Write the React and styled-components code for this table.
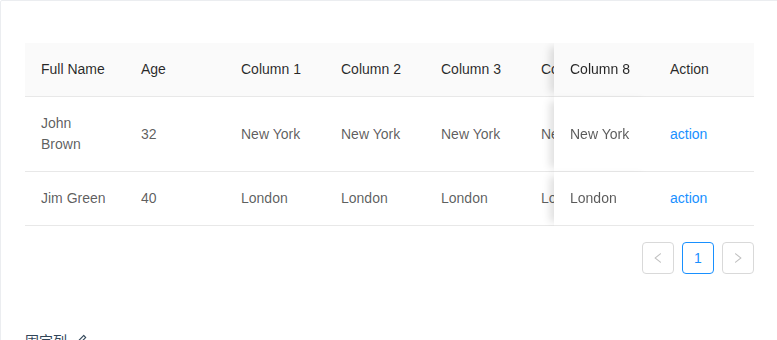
import React from 'react';
import styled, { createGlobalStyle } from 'styled-components';

const GlobalStyle = createGlobalStyle`
  html, body {
    margin: 0;
    padding: 0;
    background: #fff;
    overflow: hidden;
  }
  body {
    font-family: "Liberation Sans", Arial, "Noto Sans CJK SC", sans-serif;
    font-size: 14px;
  }
`;

const CodeBox = styled.section`
  width: 779px;
  border: 1px solid #ebedf0;
  border-radius: 2px;
  box-sizing: border-box;
`;

const Demo = styled.div`
  padding: 42px 24px 50px;
  border-bottom: 1px solid #ebedf0;
`;

const ScrollArea = styled.div`
  overflow: hidden; /* scrollbar not visible in the shot */
`;

const Table = styled.table`
  width: ${props => props.$columns * 100}px;
  table-layout: fixed;
  border-collapse: separate;
  border-spacing: 0;
  text-align: left;
`;

const Th = styled.th`
  padding: 16px;
  font-weight: normal;
  line-height: 21px;
  color: rgba(0, 0, 0, 0.85);
  background: #fafafa;
  border-bottom: 1px solid #e8e8e8;
  white-space: normal;
  ${props => props.$stickyRight !== undefined && `
    position: sticky;
    right: ${props.$stickyRight}px;
    z-index: 2;
  `}
  ${props => props.$shadow && `
    box-shadow: -8px 0 8px -4px rgba(0, 0, 0, 0.13);
  `}
`;

const Td = styled.td`
  padding: 16px;
  line-height: 21px;
  color: rgba(0, 0, 0, 0.65);
  background: #fff;
  border-bottom: 1px solid #e8e8e8;
  vertical-align: middle;
  word-wrap: break-word;
  ${props => props.$stickyRight !== undefined && `
    position: sticky;
    right: ${props.$stickyRight}px;
    z-index: 2;
  `}
  ${props => props.$shadow && `
    box-shadow: -8px 0 8px -4px rgba(0, 0, 0, 0.13);
  `}
`;

const ActionLink = styled.a`
  color: #1890ff;
  text-decoration: none;
  cursor: pointer;
`;

const Pager = styled.ul`
  display: flex;
  justify-content: flex-end;
  gap: 8px;
  list-style: none;
  margin: 16px 0;
  padding: 0;
`;

const PagerItem = styled.li`
  width: 32px;
  height: 32px;
  box-sizing: border-box;
  display: flex;
  align-items: center;
  justify-content: center;
  border: 1px solid ${props => (props.$active ? '#1890ff' : '#d9d9d9')};
  border-radius: 4px;
  color: ${props => (props.$active ? '#1890ff' : 'rgba(0, 0, 0, 0.25)')};
  font-size: 14px;
  line-height: 30px;
  background: #fff;
`;

const Meta = styled.div`
  position: relative;
  padding: 17px 16px 15px;
  height: 40px;
`;

const Title = styled.div`
  position: absolute; /* sits over the divider line, like the docs site */
  top: -12px;
  left: 16px;
  padding: 1px 8px;
  background: #fff;
  color: #314659;
  font-family: "Liberation Sans", "Noto Sans CJK SC", sans-serif;
  font-size: 14px;
  line-height: 22px;
  display: flex;
  align-items: center;
  gap: 7px;
`;

const columns = [
  'Full Name', 'Age', 'Column 1', 'Column 2', 'Column 3', 'Column 4',
  'Column 5', 'Column 6', 'Column 7', 'Column 8', 'Action',
];

const rows = [
  { key: '1', name: 'John Brown', age: 32, address: 'New York' },
  { key: '2', name: 'Jim Green', age: 40, address: 'London' },
];

// sticky offsets for the columns pinned on the right
const stickyFor = index => {
  if (index === columns.length - 1) return { $stickyRight: 0 };
  if (index === columns.length - 2) return { $stickyRight: 100, $shadow: true };
  return {};
};

function Chevron({ dir }) {
  const d =
    'M724 218.3V141c0-6.7-7.7-10.4-12.9-6.3L260.3 486.8a31.86 31.86 0 0 0 0 50.3l450.8 352.1c5.3 4.1 12.9.4 12.9-6.3v-77.3c0-4.9-2.3-9.6-6.1-12.6l-360-281 360-281.1c3.8-3 6.1-7.7 6.1-12.6z';
  return (
    <svg
      viewBox="64 64 896 896"
      width="12"
      height="12"
      fill="currentColor"
      style={dir === 'right' ? { transform: 'scaleX(-1)' } : undefined}
    >
      <path d={d} />
    </svg>
  );
}

function EditIcon() {
  return (
    <svg viewBox="64 64 896 896" width="14" height="14" fill="#314659">
      <path d="M257.7 752c2 0 4-.2 6-.5L431.9 722c2-.4 3.9-1.3 5.3-2.8l423.9-423.9a9.96 9.96 0 0 0 0-14.1L694.9 114.9c-1.9-1.9-4.4-2.9-7.1-2.9s-5.2 1-7.1 2.9L256.8 538.8c-1.5 1.5-2.4 3.3-2.8 5.3l-29.5 168.2a33.5 33.5 0 0 0 9.4 29.8c6.6 6.4 14.9 9.9 23.8 9.9zm67.4-174.4L687.8 215l73.3 73.3-362.7 362.6-88.9 15.7 15.6-89zM880 836H144c-17.7 0-32 14.3-32 32v36c0 4.4 3.6 8 8 8h784c4.4 0 8-3.6 8-8v-36c0-17.7-14.3-32-32-32z" />
    </svg>
  );
}

function cellValue(row, col) {
  if (col === 'Full Name') return row.name;
  if (col === 'Age') return row.age;
  if (col === 'Action') return <ActionLink>action</ActionLink>;
  return row.address;
}

export default function App() {
  return (
    <>
      <GlobalStyle />
      <CodeBox>
        <Demo>
          <ScrollArea>
            <Table $columns={columns.length}>
              <thead>
                <tr>
                  {columns.map((col, i) => (
                    <Th key={col} {...stickyFor(i)}>{col}</Th>
                  ))}
                </tr>
              </thead>
              <tbody>
                {rows.map(row => (
                  <tr key={row.key}>
                    {columns.map((col, i) => (
                      <Td key={col} {...stickyFor(i)}>{cellValue(row, col)}</Td>
                    ))}
                  </tr>
                ))}
              </tbody>
            </Table>
          </ScrollArea>
          <Pager>
            <PagerItem><Chevron dir="left" /></PagerItem>
            <PagerItem $active>1</PagerItem>
            <PagerItem><Chevron dir="right" /></PagerItem>
          </Pager>
        </Demo>
        <Meta>
          <Title>
            固定列
            <EditIcon />
          </Title>
        </Meta>
      </CodeBox>
    </>
  );
}
